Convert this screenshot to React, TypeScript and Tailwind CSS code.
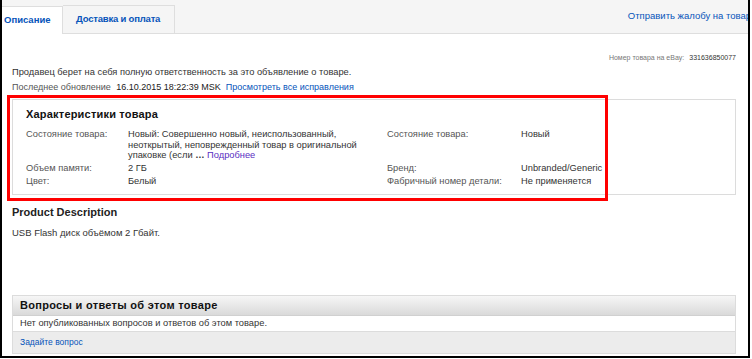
import React from "react";

const font = { fontFamily: '"Liberation Sans", Arial, sans-serif' };

export default function App() {
  return (
    <div className="w-[752px] h-[359px] bg-white relative overflow-hidden" style={font}>
      <div className="w-[750px] h-[358px] border-l-2 border-r-2 border-b-2 border-black flex flex-col overflow-hidden">
        {/* Tab bar */}
        <div className="h-[34px] bg-[#f5f5f5] border-b border-[#dedede] flex items-end shrink-0">
          <div className="h-[28px] w-[61px] bg-white border-t border-r border-[#dedede] -mb-px flex items-center pl-[2px]">
            <span className="text-[9.5px] font-bold text-[#0654ba]">Описание</span>
          </div>
          <div className="h-[28px] w-[112px] border-t border-r border-[#dedede] flex items-center pl-[13px]">
            <span className="text-[9.5px] font-bold text-[#0654ba] tracking-[-0.2px]">Доставка и оплата</span>
          </div>
          <div className="flex-1 h-full flex items-center justify-end pb-[1px] -mr-[3px]">
            <span className="text-[9.5px] text-[#0654ba] whitespace-nowrap">Отправить жалобу на товар</span>
          </div>
        </div>

        {/* Content */}
        <div className="flex flex-col pl-[10px] pr-[12px]">
          <div className="flex justify-end pt-[19px] pr-[0px] text-[7px] text-[#777] leading-[10px]">
            <span>Номер товара на eBay:</span>
            <span className="ml-[5px] text-[#333]">331636850077</span>
          </div>
          <div className="mt-[3px] text-[9.3px] text-[#333] leading-[12px]">
            Продавец берет на себя полную ответственность за это объявление о товаре.
          </div>
          <div className="mt-[3px] text-[9px] text-[#555] leading-[12px]">
            Последнее обновление <span className="ml-[3px] text-[#222]">16.10.2015 18:22:39 MSK</span>
            <span className="ml-[5px] text-[#0654ba]">Просмотреть все исправления</span>
          </div>

          {/* Item specifics */}
          <div className="mt-[6px] border border-[#dcdcdc] h-[96px] pl-[13px] pt-[8px] text-[9.3px] leading-[10.5px] text-[#333]">
            <div className="text-[11px] font-bold text-[#111] leading-[13px] tracking-[0.2px]">Характеристики товара</div>
            <div className="mt-[8px] grid grid-cols-[102px_259px_134px_1fr]">
              <div className="text-[#555]">Состояние товара:</div>
              <div className="max-w-[234px]">
                Новый: Совершенно новый, неиспользованный, неоткрытый, неповрежденный товар в оригинальной упаковке (если <span className="font-bold">…</span>{" "}
                <span className="text-[#5a2fc2]">Подробнее</span>
              </div>
              <div className="text-[#555]">Состояние товара:</div>
              <div>Новый</div>

              <div className="mt-[2.5px] text-[#555]">Объем памяти:</div>
              <div className="mt-[2.5px]">2 ГБ</div>
              <div className="mt-[2.5px] text-[#555]">Бренд:</div>
              <div className="mt-[2.5px]">Unbranded/Generic</div>

              <div className="mt-[2.5px] text-[#555]">Цвет:</div>
              <div className="mt-[2.5px]">Белый</div>
              <div className="mt-[2.5px] text-[#555]">Фабричный номер детали:</div>
              <div className="mt-[2.5px]">Не применяется</div>
            </div>
          </div>

          <div className="mt-[10px] text-[11px] font-bold text-[#222] leading-[14px]">Product Description</div>
          <div className="mt-[8px] text-[9.5px] text-[#333] leading-[12px]">USB Flash диск объёмом 2 Гбайт.</div>

          {/* Q&A */}
          <div className="mt-[56px] border border-[#dcdcdc] flex flex-col">
            <div className="h-[20px] bg-gradient-to-b from-[#f6f6f6] to-[#dadada] border-b border-[#d0d0d0] flex items-center pl-[7px]">
              <span className="text-[11px] font-bold text-[#111] tracking-[0.3px]">Вопросы и ответы об этом товаре</span>
            </div>
            <div className="h-[16px] bg-white border-b border-[#dcdcdc] flex items-center pl-[7px] text-[9.3px] text-[#333]">
              Нет опубликованных вопросов и ответов об этом товаре.
            </div>
            <div className="h-[21px] bg-[#ececec] flex items-center pl-[7px] text-[8.5px] text-[#0654ba]">
              Задайте вопрос
            </div>
          </div>
        </div>
      </div>

      {/* Red annotation box */}
      <div className="absolute left-[7px] top-[95px] w-[601px] h-[106px] border-[3px] border-[#ff0000]" />
    </div>
  );
}
